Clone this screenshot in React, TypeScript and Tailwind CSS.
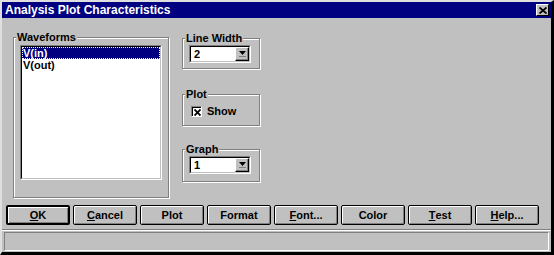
import React from "react";

const face = "bg-[#c0c0c0]";

function Group({
  label,
  className,
  children,
}: {
  label: string;
  className: string;
  children?: React.ReactNode;
}) {
  return (
    <div
      className={`relative border border-[#808080] shadow-[inset_1px_1px_0_#fff,1px_1px_0_#fff] ${className}`}
    >
      <span className="absolute -top-[8px] left-[2px] bg-[#c0c0c0] px-px text-[11px] font-bold leading-[14px] text-black">
        {label}
      </span>
      {children}
    </div>
  );
}

function Combo({ value }: { value: string }) {
  return (
    <div className="flex h-[18px] w-[62px] border border-t-[#808080] border-l-[#808080] border-r-white border-b-white bg-white">
      <div className="flex flex-1 border border-t-black border-l-black border-r-[#c0c0c0] border-b-[#c0c0c0]">
        <span className="flex-1 pl-[3px] text-[11px] font-bold leading-[14px]">{value}</span>
        <div className="flex w-[14px] items-center justify-center border border-t-white border-l-white border-r-black border-b-black bg-[#c0c0c0] shadow-[inset_-1px_-1px_0_#808080]">
          <svg width="7" height="6" viewBox="0 0 7 6">
            <path d="M0 0h7L3.5 4z" fill="#000" />
            <rect x="0" y="5" width="7" height="1" fill="#808080" />
          </svg>
        </div>
      </div>
    </div>
  );
}

function Btn({
  children,
  isDefault,
}: {
  children: React.ReactNode;
  isDefault?: boolean;
}) {
  return (
    <div
      className={`flex h-[20px] w-[64px] items-center justify-center rounded-[2px] border-black bg-[#c0c0c0] text-[11px] font-bold leading-none text-black shadow-[inset_1px_1px_0_#fff,inset_-1px_-1px_0_#808080] ${
        isDefault ? "border-2" : "border"
      }`}
    >
      {children}
    </div>
  );
}

export default function App() {
  return (
    <div
      className={`flex h-[255px] w-[554px] flex-col border-t-2 border-l-2 border-r-[3px] border-b-[3px] border-t-[#dfdfdf] border-l-[#dfdfdf] border-r-black border-b-black ${face} font-['Liberation_Sans',Arial,sans-serif] text-black`}
    >
      {/* title bar */}
      <div className="flex h-[16px] items-center justify-between bg-[#000080] pl-[3px] pr-[2px]">
        <span className="text-[12px] font-bold leading-none text-white">
          Analysis Plot Characteristics
        </span>
        <div className="flex h-[12px] w-[13px] items-center justify-center border border-t-white border-l-white border-r-black border-b-black bg-[#c0c0c0]">
          <svg width="8" height="7" viewBox="0 0 8 7">
            <path d="M0.5 0.5l7 6M7.5 0.5l-7 6" stroke="#000" strokeWidth="1.8" />
          </svg>
        </div>
      </div>

      <div className="flex pl-[11px] pt-[19px]">
        <Group label="Waveforms" className="h-[161px] w-[156px] px-[6px] pt-[7px] pb-[17px]">
          <div className="h-full border border-t-[#808080] border-l-[#808080] border-r-white border-b-white">
            <div className="h-full border border-t-black border-l-black border-r-[#c0c0c0] border-b-[#c0c0c0] bg-white">
              <div className="bg-[#000080] text-[11px] font-bold leading-[12px] text-white outline outline-1 -outline-offset-1 outline-dotted outline-white">
                <span className="pl-[1px]">V(in)</span>
              </div>
              <div className="pl-[1px] text-[11px] font-bold leading-[12px]">V(out)</div>
            </div>
          </div>
        </Group>

        <div className="ml-[13px] flex flex-col pt-px">
          <Group label="Line Width" className="h-[31px] w-[78px] pl-[6px] pt-[6px]">
            <Combo value="2" />
          </Group>
          <Group label="Plot" className="mt-[25px] h-[32px] w-[78px] pl-[8px] pt-[11px]">
            <div className="flex items-center gap-[5px]">
              <div className="flex h-[11px] w-[11px] items-center justify-center border border-t-[#808080] border-l-[#808080] border-r-white border-b-white bg-white shadow-[inset_1px_1px_0_#000]">
                <svg width="7" height="7" viewBox="0 0 7 7" className="ml-px mt-px">
                  <path d="M0.5 0.5l6 6M6.5 0.5l-6 6" stroke="#000" strokeWidth="1.8" />
                </svg>
              </div>
              <span className="text-[11px] font-bold leading-none">Show</span>
            </div>
          </Group>
          <Group label="Graph" className="mt-[23px] h-[33px] w-[78px] pl-[6px] pt-[6px]">
            <Combo value="1" />
          </Group>
        </div>
      </div>

      <div className="mt-[7px] flex gap-[3px] pl-[4px]">
        <Btn isDefault>
          <span className="underline">O</span>K
        </Btn>
        <Btn>
          <span className="underline">C</span>ancel
        </Btn>
        <Btn>Plot</Btn>
        <Btn>Format</Btn>
        <Btn>
          <span className="underline">F</span>ont...
        </Btn>
        <Btn>Color</Btn>
        <Btn>
          <span className="underline">T</span>est
        </Btn>
        <Btn>
          <span className="underline">H</span>elp...
        </Btn>
      </div>

      <div className="mt-[4px] h-[2px] border-t border-b border-t-[#808080] border-b-white" />
      <div className="mx-[2px] mt-[1px] h-[19px] border border-t-[#808080] border-l-[#808080] border-r-white border-b-white" />
    </div>
  );
}
